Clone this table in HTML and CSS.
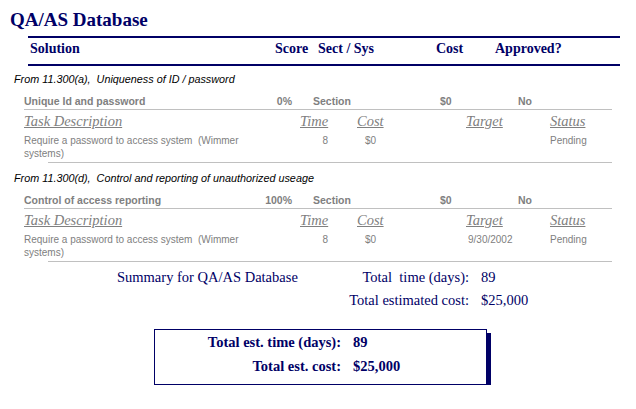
FILE: index.html
```html
<!DOCTYPE html>
<html>
<head>
<meta charset="utf-8">
<link rel="stylesheet" href="styles.css">
</head>
<body>
<div class="page">
  <h1 class="title">QA/AS Database</h1>
  <div class="head">
    <span class="h-sol">Solution</span><span>Score</span><span>Sect / Sys</span><span>Cost</span><span>Approved?</span>
  </div>

  <section class="group">
    <p class="req">From 11.300(a),&nbsp; Uniqueness of ID / password</p>
    <div class="sol"><span>Unique Id and password</span><span class="score">0%</span><span class="sect">Section</span><span>$0</span><span>No</span></div>
    <div class="th"><span>Task Description</span><span>Time</span><span>Cost</span><span>Target</span><span>Status</span></div>
    <div class="td"><span class="desc">Require a password to access system&nbsp; (Wimmer systems)</span><span class="time">8</span><span class="cost">$0</span><span class="target"></span><span>Pending</span></div>
  </section>

  <section class="group">
    <p class="req">From 11.300(d),&nbsp; Control and reporting of unauthorized useage</p>
    <div class="sol"><span>Control of access reporting</span><span class="score">100%</span><span class="sect">Section</span><span>$0</span><span>No</span></div>
    <div class="th"><span>Task Description</span><span>Time</span><span>Cost</span><span>Target</span><span>Status</span></div>
    <div class="td"><span class="desc">Require a password to access system&nbsp; (Wimmer systems)</span><span class="time">8</span><span class="cost">$0</span><span class="target">9/30/2002</span><span>Pending</span></div>
  </section>

  <div class="summary">
    <div class="sum-label">Summary for QA/AS Database</div>
    <div class="sum-grid">
      <span class="k">Total&nbsp; time (days):</span><span class="v">89</span>
      <span class="k">Total estimated cost:</span><span class="v">$25,000</span>
    </div>
  </div>

  <div class="box">
    <span class="k">Total est. time (days):</span><span class="v">89</span>
    <span class="k">Total est. cost:</span><span class="v">$25,000</span>
  </div>
</div>
</body>
</html>
```

FILE: styles.css
```css
html, body {
  margin: 0;
  padding: 0;
  background: #ffffff;
}

.page {
  width: 636px;
  padding-top: 9px;
  font-family: "Liberation Serif", "Times New Roman", serif;
  color: #000066;
}

.title {
  margin: 0 0 5px 10px;
  font-size: 19px;
  line-height: 22px;
  font-weight: bold;
}

.head {
  margin-left: 28px;
  width: 592px;
  border-top: 2px solid #000066;
  border-bottom: 2px solid #000066;
  padding-bottom: 4px;
  display: grid;
  grid-template-columns: 247px 43px 118px 59px 1fr;
  font-size: 14px;
  line-height: 22px;
  font-weight: bold;
}

.h-sol {
  padding-left: 2px;
}

.group {
  margin-top: 6px;
}

.group + .group {
  margin-top: 8px;
}

.req {
  margin: 0 0 0 14px;
  font-family: "Liberation Sans", Arial, sans-serif;
  font-style: italic;
  font-size: 10.8px;
  line-height: 14px;
  color: #000000;
}

.sol {
  margin: 8px 0 0 24px;
  width: 588px;
  display: grid;
  grid-template-columns: 226px 42px 148px 78px 1fr;
  font-family: "Liberation Sans", Arial, sans-serif;
  font-weight: bold;
  font-size: 10.5px;
  line-height: 14px;
  color: #808080;
  padding-bottom: 1px;
  border-bottom: 1px solid #c0c0c0;
}

.score {
  text-align: right;
}

.sect {
  padding-left: 21px;
}

.th, .td {
  margin-left: 24px;
  width: 588px;
  display: grid;
  grid-template-columns: 276px 57px 109px 84px 1fr;
  color: #808080;
}

.th {
  font-size: 14.5px;
  line-height: 23px;
  font-style: italic;
  text-decoration: underline;
}

.td {
  font-family: "Liberation Sans", Arial, sans-serif;
  font-size: 10px;
  line-height: 13px;
  padding-top: 1px;
}

.td::after {
  content: "";
  grid-column: 1 / -1;
  margin-left: 24px;
  margin-top: 2px;
  border-top: 1px solid #c0c0c0;
}

.desc {
  width: 230px;
}

.time {
  text-align: right;
  padding-right: 29px;
}

.cost {
  padding-left: 8px;
}

.target {
  padding-left: 2px;
}

.summary {
  margin-top: 4px;
  display: flex;
  font-size: 14.5px;
  line-height: 23px;
}

.sum-label {
  margin-left: 117px;
  width: 200px;
}

.sum-grid {
  display: grid;
  grid-template-columns: 152px auto;
  column-gap: 12px;
}

.sum-grid .k {
  text-align: right;
}

.box {
  margin: 17px 0 0 154px;
  width: 331px;
  height: 54px;
  border: 1px solid #000066;
  box-shadow: 4px 4px 0 #000066;
  display: grid;
  grid-template-columns: 186px auto;
  column-gap: 12px;
  align-content: start;
  font-size: 14.5px;
  line-height: 24px;
  font-weight: bold;
}

.box .k {
  text-align: right;
}
```
